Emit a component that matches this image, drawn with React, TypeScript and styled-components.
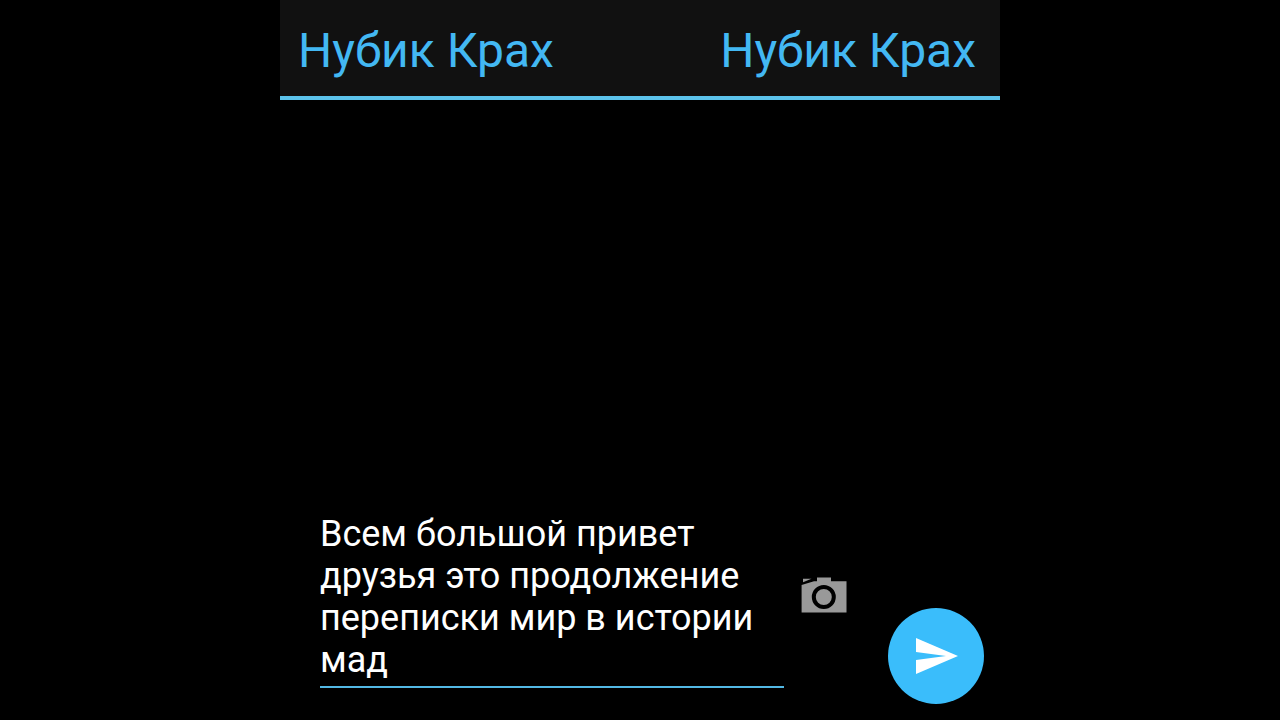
import React, { useState } from 'react';
import styled, { createGlobalStyle } from 'styled-components';

const GlobalStyle = createGlobalStyle`
  * {
    box-sizing: border-box;
  }
  body {
    margin: 0;
    background: #000;
    font-family: Roboto, sans-serif;
  }
`;

const Screen = styled.div`
  display: flex;
  flex-direction: column;
  width: 100%;
  max-width: 720px;
  min-height: 100vh;
  margin: 0 auto;
`;

const Header = styled.header`
  display: flex;
  justify-content: space-between;
  align-items: center;
  padding: 23px 24px 17px 18px;
  background: #111;
  border-bottom: 4px solid #5cc3ec;
`;

const Name = styled.span`
  color: #43b8f3;
  font-size: 48px;
  line-height: 56px;
  white-space: nowrap;
`;

const Messages = styled.main`
  flex: 1;
`;

const Composer = styled.form`
  display: flex;
  align-items: flex-end;
  gap: 40px;
  padding: 0 16px 16px 40px;
`;

const Field = styled.div`
  display: flex;
  flex: 1;
  align-items: center;
  gap: 16px;
  min-width: 0;
  margin-bottom: 16px;
`;

const MessageInput = styled.textarea`
  display: block;
  flex: 1;
  min-width: 0;
  padding: 1px 0 5px;
  border: 0;
  border-bottom: 2px solid #52b8e4;
  border-radius: 0;
  outline: 0;
  resize: none;
  overflow: hidden;
  background: transparent;
  color: #fff;
  font-family: inherit;
  font-size: 36px;
  line-height: 42px;
`;

const IconButton = styled.button`
  display: flex;
  flex: none;
  padding: 0;
  border: 0;
  background: none;
  color: #999;
  cursor: pointer;
`;

const SendButton = styled(IconButton)`
  width: 96px;
  height: 96px;
  align-items: center;
  justify-content: center;
  border-radius: 50%;
  background: #3abdfb;
  color: #fff;
`;

function CameraIcon() {
  return (
    <svg width="48" height="48" viewBox="0 0 48 48" aria-hidden="true">
      <path fill="currentColor" d="M3 2.8h8.5L3 6.2z" />
      <path fill="currentColor" d="M17 1.5h14v3.8h15.5v31.2H1.6V9L14 5.3h3z" />
      <circle cx="23.8" cy="21" r="10" fill="none" stroke="#000" strokeWidth="4" />
    </svg>
  );
}

function SendIcon() {
  return (
    <svg width="48" height="48" viewBox="0 0 48 48" aria-hidden="true">
      <path fill="currentColor" d="M4 42 46 24 4 6v14l30 4-30 4z" />
    </svg>
  );
}

export default function App() {
  const [text, setText] = useState(
    'Всем большой привет друзья это продолжение переписки мир в истории мад'
  );

  return (
    <>
      <GlobalStyle />
      <Screen>
        <Header>
          <Name>Нубик Крах</Name>
          <Name>Нубик Крах</Name>
        </Header>
        <Messages />
        <Composer onSubmit={(event) => event.preventDefault()}>
          <Field>
            <MessageInput
              rows={4}
              aria-label="Сообщение"
              spellCheck={false}
              value={text}
              onChange={(event) => setText(event.target.value)}
            />
            <IconButton type="button" aria-label="Камера">
              <CameraIcon />
            </IconButton>
          </Field>
          <SendButton type="submit" aria-label="Отправить">
            <SendIcon />
          </SendButton>
        </Composer>
      </Screen>
    </>
  );
}
